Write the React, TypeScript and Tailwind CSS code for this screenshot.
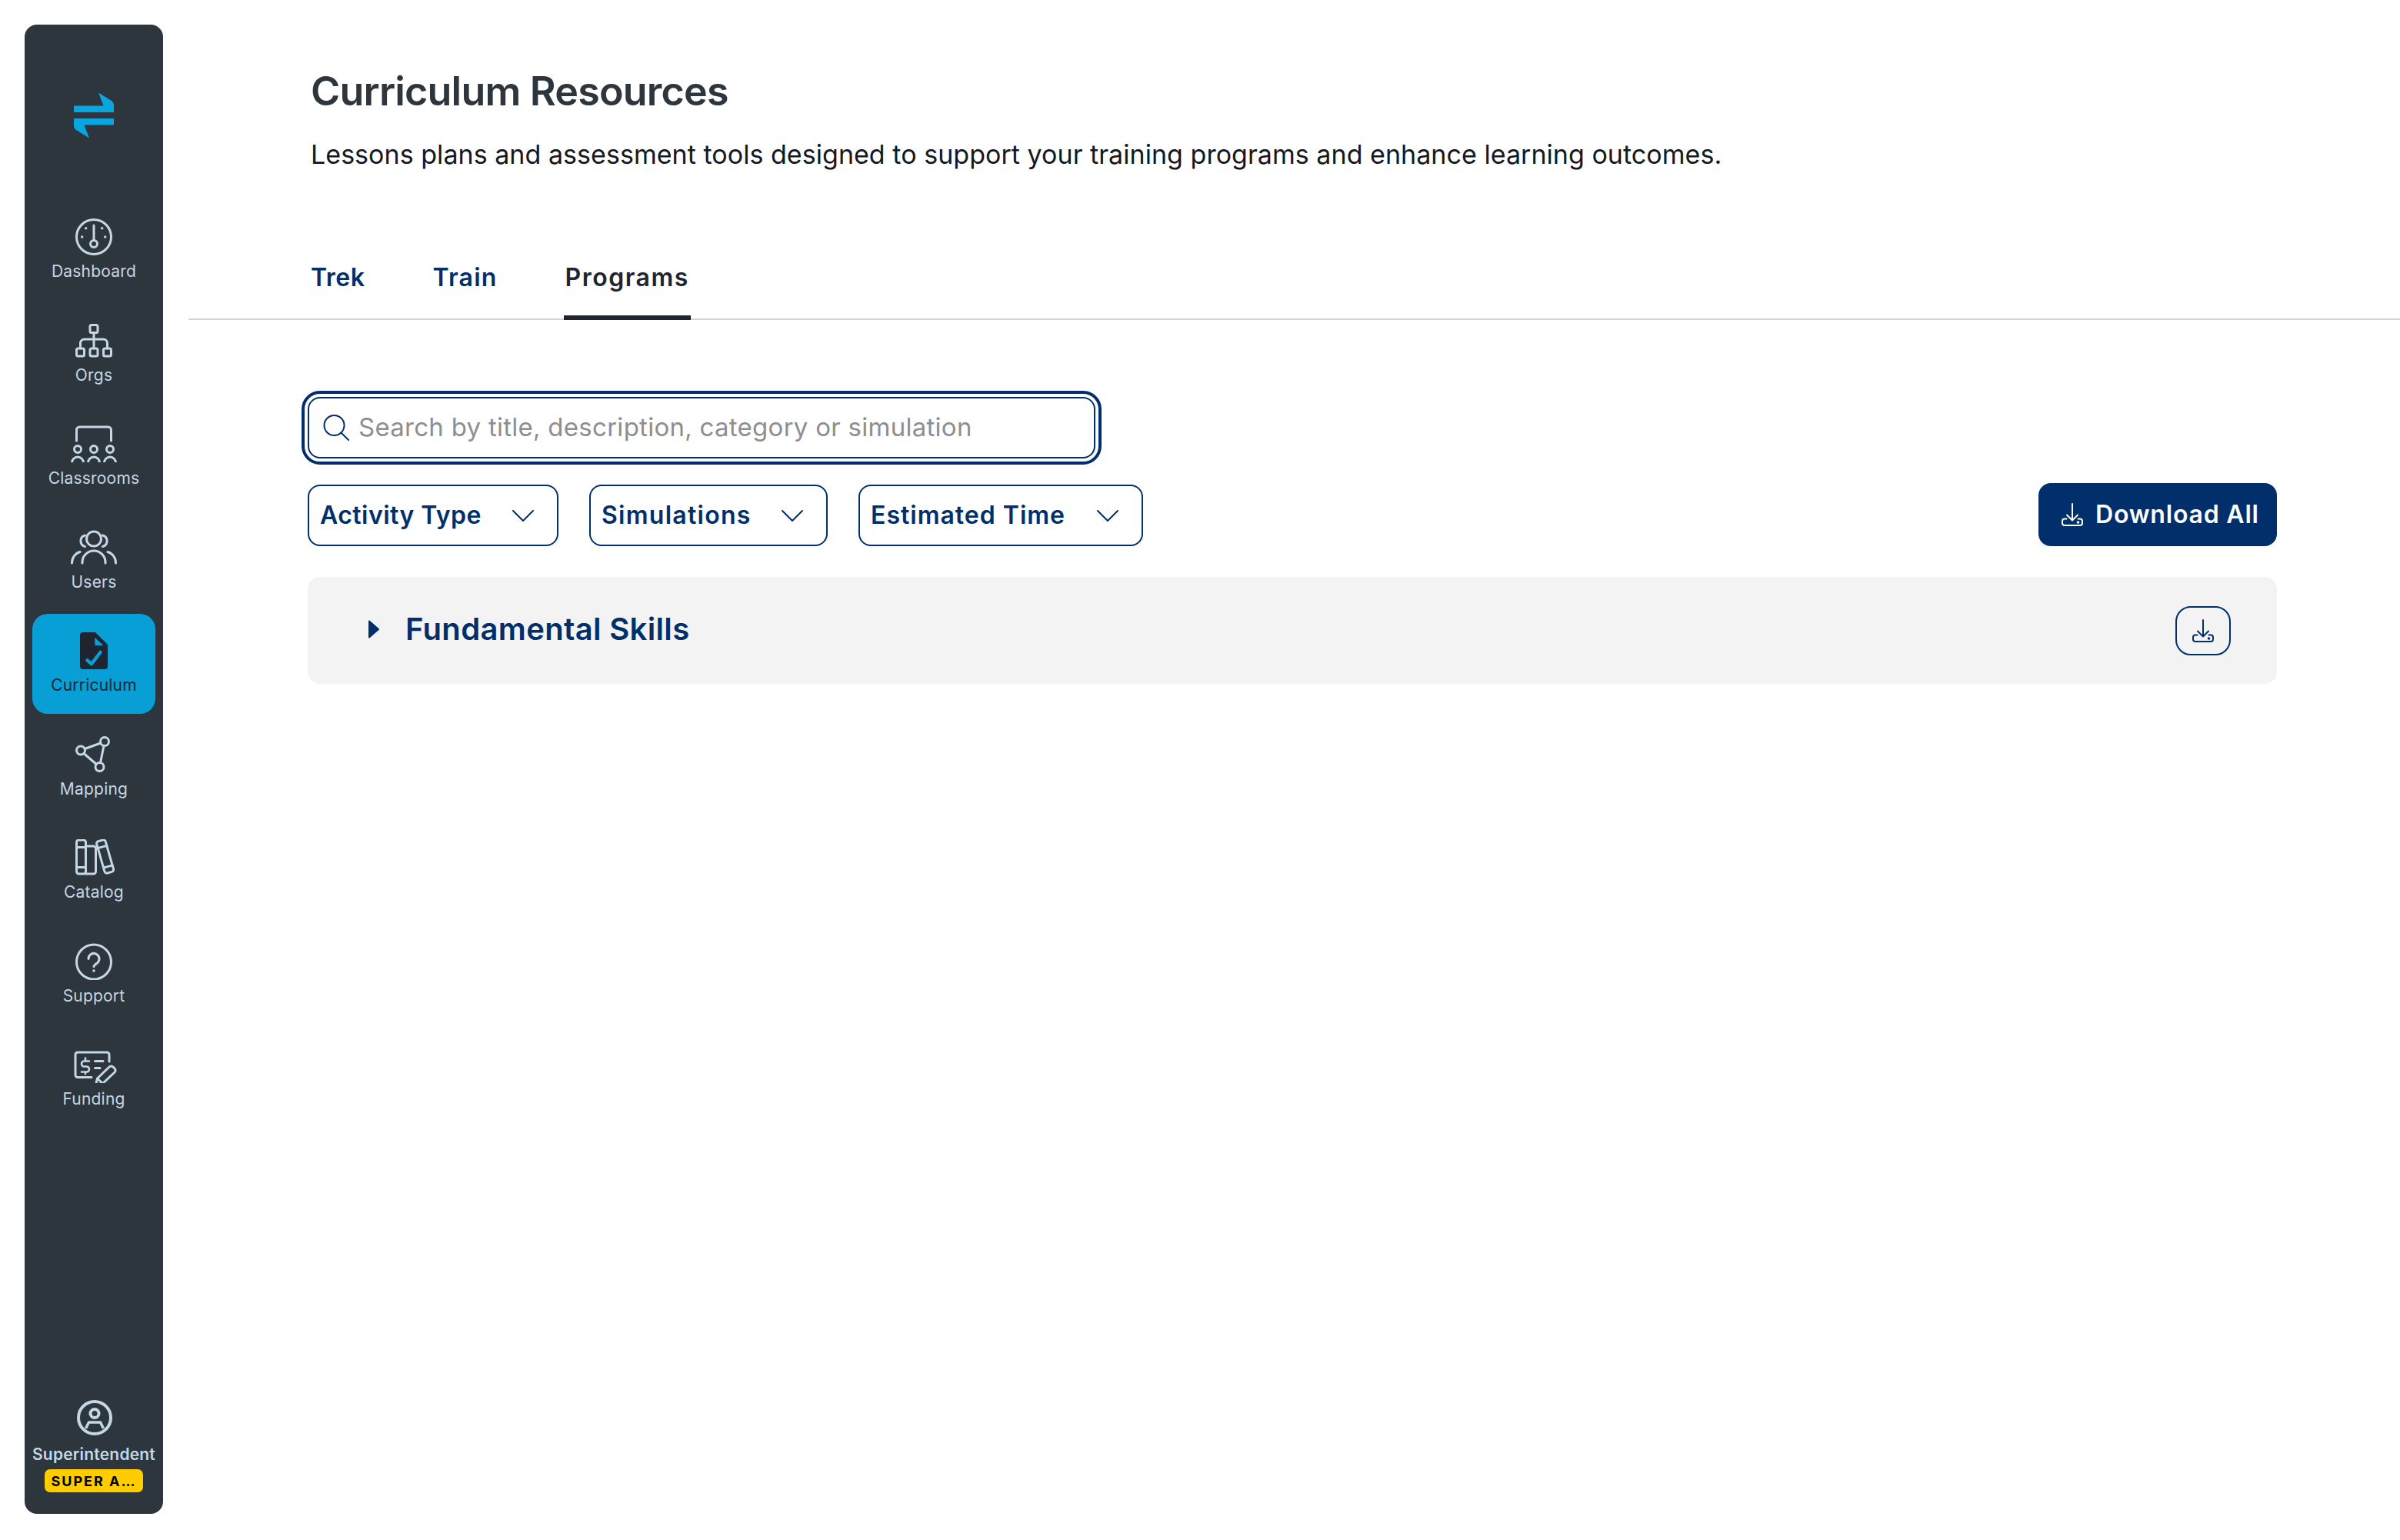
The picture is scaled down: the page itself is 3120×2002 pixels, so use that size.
import React from "react";

const Ico = ({ children, active }: { children: React.ReactNode; active?: boolean }) => (
  <svg
    width="64"
    height="48"
    viewBox="-8 0 64 48"
    fill="none"
    stroke={active ? "#1e2530" : "#c5d7e5"}
    strokeWidth="3"
    strokeLinecap="round"
    strokeLinejoin="round"
  >
    {children}
  </svg>
);

const nav: { label: string; active?: boolean; icon: React.ReactNode }[] = [
  {
    label: "Dashboard",
    icon: (
      <>
        <circle cx="24" cy="24" r="22.5" />
        <path d="M24 9V28" />
        <circle cx="24" cy="33" r="4.5" />
        <g fill="#c5d7e5" stroke="none">
          <circle cx="13.7" cy="12.7" r="1.7" />
          <circle cx="34.7" cy="12.7" r="1.7" />
          <circle cx="8.7" cy="24" r="1.7" />
          <circle cx="38.7" cy="24" r="1.7" />
        </g>
      </>
    ),
  },
  {
    label: "Orgs",
    icon: (
      <>
        <rect x="19" y="3.5" width="10" height="10" rx="2" />
        <rect x="1.5" y="34" width="10" height="10" rx="2" />
        <rect x="19" y="34" width="10" height="10" rx="2" />
        <rect x="36.5" y="34" width="10" height="10" rx="2" />
        <path d="M24 13.5V34M6.5 34V27a5 5 0 0 1 5-5H36.5a5 5 0 0 1 5 5V34" />
      </>
    ),
  },
  {
    label: "Classrooms",
    icon: (
      <>
        <path d="M1.5 20V6a4 4 0 0 1 4-4H42.500a4 4 0 0 1 4 4V20" />
        <circle cx="3" cy="31" r="4.500" />
        <circle cx="24" cy="31" r="4.500" />
        <circle cx="45" cy="31" r="4.500" />
        <path d="M-4.500 48.500a7.500 7.500 0 0 1 15 0M16.500 48.500a7.500 7.500 0 0 1 15 0M37.500 48.500a7.500 7.500 0 0 1 15 0" />
      </>
    ),
  },
  {
    label: "Users",
    icon: (
      <>
        <circle cx="24" cy="12.500" r="9.500" />
        <path d="M12.500 8A7.500 7.500 0 0 0 12.500 22.500M35.500 8A7.500 7.500 0 0 1 35.500 22.500" />
        <path d="M9 44V43a15 15 0 0 1 30 0V44" />
        <path d="M-4.500 44C-4.500 37 0 31 6 29.500M52.500 44C52.500 37 48 31 42 29.500" />
      </>
    ),
  },
  {
    label: "Curriculum",
    active: true,
    icon: (
      <>
        <path
          d="M10 0H26L42 16V44a4 4 0 0 1-4 4H10a4 4 0 0 1-4-4V4a4 4 0 0 1 4-4Z"
          fill="#1e2530"
          stroke="none"
        />
        <path d="M25.300 6.700L36.300 17H25.300Z" fill="#089ed6" stroke="none" />
        <path d="M15.500 36.500L21 41L32.500 26" stroke="#089ed6" strokeWidth="4.500" />
      </>
    ),
  },
  {
    label: "Mapping",
    icon: (
      <>
        <circle cx="7" cy="18.500" r="5.500" />
        <circle cx="38" cy="7" r="5.500" />
        <circle cx="31.500" cy="40" r="5.500" />
        <path d="M12.200 16.500L32.800 9M11 22.500L27.300 36.500M37 12.500L32.500 34.500" />
      </>
    ),
  },
  {
    label: "Catalog",
    icon: (
      <>
        <rect x="1.500" y="1" width="12" height="44" rx="3" />
        <path d="M1.500 10.500H13.500M1.500 36.500H13.500" />
        <path d="M13.500 9H23.500a3 3 0 0 1 3 3V42a3 3 0 0 1-3 3H13.500" />
        <g transform="rotate(-16 38.600 22.500)">
          <rect x="32.600" y="1" width="12" height="43" rx="3" />
          <path d="M32.600 9.500H44.600M32.600 36H44.600" />
        </g>
      </>
    ),
  },
  {
    label: "Support",
    icon: (
      <>
        <circle cx="24" cy="24.500" r="22.500" />
        <path d="M17 20.500a7 7 0 1 1 11.500 5.300c-2.500 2-4.500 3-4.500 4.700" />
        <circle cx="24" cy="36" r="1.800" fill="#c5d7e5" stroke="none" />
      </>
    ),
  },
  {
    label: "Funding",
    icon: (
      <>
        <path d="M21 40.500H3a3 3 0 0 1-3-3V11a3 3 0 0 1 3-3H41a3 3 0 0 1 3 3V20" />
        <path d="M18 19.500H11.500a3.500 3.500 0 0 0 0 7H14.500a3.500 3.500 0 0 1 0 7H8M13 15.500V19M13 33.500V36" strokeWidth="2.600" />
        <path d="M25.500 19.500H36M25.500 28.500H32" />
        <path d="M26.500 50L28.500 42L44 27a3.500 3.500 0 0 1 5 0l2 2a3.500 3.500 0 0 1 0 5L35.500 48.500Z" />
        <path d="M28.500 42L35.500 48.500" />
      </>
    ),
  },
];

const DownloadIcon = ({ color }: { color: string }) => (
  <svg width="28" height="30" viewBox="0 0 28 30" fill="none" stroke={color} strokeWidth="2" strokeLinecap="round" strokeLinejoin="round">
    <path d="M14 1V22M7 15.500L14 22.500L21 15.500" />
    <path d="M6.500 20.500H4a3 3 0 0 0-3 3V26a3 3 0 0 0 3 3H24a3 3 0 0 0 3-3V23.500a3 3 0 0 0-3-3H21.500" />
    <circle cx="21.500" cy="25" r="0.800" fill={color} />
  </svg>
);

const Chevron = () => (
  <svg width="28" height="15" viewBox="0 0 28 15" fill="none" stroke="#002f6c" strokeWidth="2" strokeLinecap="round" strokeLinejoin="round">
    <path d="M1 1L14 14L27 1" />
  </svg>
);

const filters = [
  { label: "Activity Type", w: "w-[326px]", t: "tracking-[0.45px]" },
  { label: "Simulations", w: "w-[310px]", t: "tracking-[1.27px]" },
  { label: "Estimated Time", w: "w-[370px]", t: "tracking-[1px]" },
];

export default function App() {
  return (
    <div className="flex h-[2002px] w-[3120px] overflow-hidden bg-white font-['Inter',sans-serif]">
      <aside className="ml-[32px] mt-[32px] flex h-[1936px] w-[180px] shrink-0 flex-col items-center rounded-[16px] bg-[#2d353d]">
        <svg className="mt-[88px] shrink-0" width="52" height="60" viewBox="0 0 52 60" fill="#0aa5e0">
          <path d="M0 17.500H38.500L32 0.500L49 11Q52 13 52 16V26H0Z" />
          <path d="M52 42.500H13.500L20 59.500L3 49Q0 47 0 44V34H52Z" />
        </svg>
        <nav className="mt-[80px] flex w-[160px] flex-col gap-[4.5px]">
          {nav.map((n) => (
            <div
              key={n.label}
              className={
                n.active
                  ? "flex h-[130px] flex-col items-center rounded-[20px] bg-[#089ed6] pt-[24px]"
                  : "flex h-[130px] flex-col items-center rounded-[20px] pt-[24px]"
              }
            >
              <Ico active={n.active}>{n.icon}</Ico>
              <span
                className={
                  n.active
                    ? "mt-[7px] text-[21px] leading-[28px] tracking-[0.2px] text-[#1e2530]"
                    : "mt-[7px] text-[21px] leading-[28px] tracking-[0.2px] text-[#c5d7e5]"
                }
              >
                {n.label}
              </span>
            </div>
          ))}
        </nav>
        <div className="mt-auto mb-[28px] flex flex-col items-center">
          <svg className="ml-[2px]" width="46" height="46" viewBox="0 0 46 46" fill="none" stroke="#c5d7e5" strokeWidth="4" strokeLinejoin="round">
            <circle cx="23" cy="23" r="21" />
            <circle cx="23" cy="17.500" r="5.500" />
            <path d="M11.500 37L15.500 29H30.500L34.500 37" strokeWidth="3.500" />
          </svg>
          <span className="mt-[11px] text-[21px] font-semibold leading-[28px] tracking-[0.2px] text-[#c5d7e5]">Superintendent</span>
          <span className="mt-[5px] flex h-[30px] w-[128px] items-center justify-center rounded-[7px] bg-[#ffcc00] text-[18px] font-bold tracking-[2px] text-black">
            SUPER A…
          </span>
        </div>
      </aside>

      <main className="ml-[33px] flex min-w-0 flex-1 flex-col">
        <div className="pl-[159px]">
          <h1 className="mt-[83px] text-[52px] font-semibold leading-[72px] tracking-[-0.8px] text-[#2d353d]">Curriculum Resources</h1>
          <p className="mt-[19px] text-[34px] leading-[54px] tracking-[0.04px] text-[#14181f]">
            Lessons plans and assessment tools designed to support your training programs and enhance learning outcomes.
          </p>
        </div>

        <div className="mt-[76px] flex gap-[84px] border-b-2 border-[#d4d4d4] pl-[157px]">
          <div className="-mb-[2px] flex h-[112px] items-center border-b-[6px] border-transparent px-[2px] pt-[8px] text-[32px] font-semibold tracking-[0.5px] text-[#002f6c]">Trek</div>
          <div className="-mb-[2px] flex h-[112px] items-center border-b-[6px] border-transparent px-[2px] pt-[8px] text-[32px] font-semibold tracking-[1.2px] text-[#002f6c]">Train</div>
          <div className="-mb-[2px] flex h-[112px] items-center border-b-[6px] border-[#1e2530] px-[2px] pt-[8px] text-[32px] font-semibold tracking-[1.5px] text-[#1e2530]">Programs</div>
        </div>

        <div className="pl-[155px] pr-[160px]">
          <div className="mt-[100px] flex h-[80px] w-[1024px] items-center gap-[12px] rounded-[16px] border-2 border-[#002f6c] pl-[18px] outline-4 outline-offset-4 outline-[#002f6c]">
            <svg className="shrink-0" width="34" height="34" viewBox="0 0 34 34" fill="none" stroke="#002f6c" strokeWidth="2" strokeLinecap="round">
              <circle cx="14.500" cy="14" r="13" />
              <path d="M24 24L33 33" />
            </svg>
            <input
              className="min-w-0 flex-1 bg-transparent text-[33px] tracking-[0.27px] text-[#14181f] outline-none placeholder:text-[#8e8e90]"
              placeholder="Search by title, description, category or simulation"
            />
          </div>

          <div className="mt-[32px] flex items-start">
            <div className="mt-[2px] flex gap-[40px]">
              {filters.map((f) => (
                <div
                  key={f.label}
                  className={`${f.w} flex h-[80px] items-center justify-between rounded-[16px] border-2 border-[#002f6c] pl-[14px] pr-[30px] text-[32px] font-semibold text-[#002f6c]`}
                >
                  <span className={f.t}>{f.label}</span>
                  <Chevron />
                </div>
              ))}
            </div>
            <button className="ml-auto flex h-[82px] w-[310px] items-center gap-[16px] rounded-[16px] bg-[#002f6c] pl-[30px] text-[32px] font-semibold text-white">
              <DownloadIcon color="#ffffff" />
              <span className="tracking-[0.8px]">Download All</span>
            </button>
          </div>

          <div className="mt-[40px] flex h-[139px] items-center rounded-[16px] bg-[#f3f3f3] pl-[79px] pr-[60px]">
            <div className="mb-[4px] flex items-center">
              <svg width="14" height="24" viewBox="0 0 14 24" fill="#002f6c" stroke="#002f6c" strokeWidth="2" strokeLinejoin="round">
                <path d="M1 1.500L13 12L1 22.500Z" />
              </svg>
              <span className="ml-[34px] text-[40px] font-semibold tracking-[0.35px] text-[#002f6c]">Fundamental Skills</span>
            </div>
            <div className="ml-auto flex h-[64px] w-[72px] items-center justify-center rounded-[20px] border-2 border-[#002f6c]">
              <DownloadIcon color="#002f6c" />
            </div>
          </div>
        </div>
      </main>
    </div>
  );
}
